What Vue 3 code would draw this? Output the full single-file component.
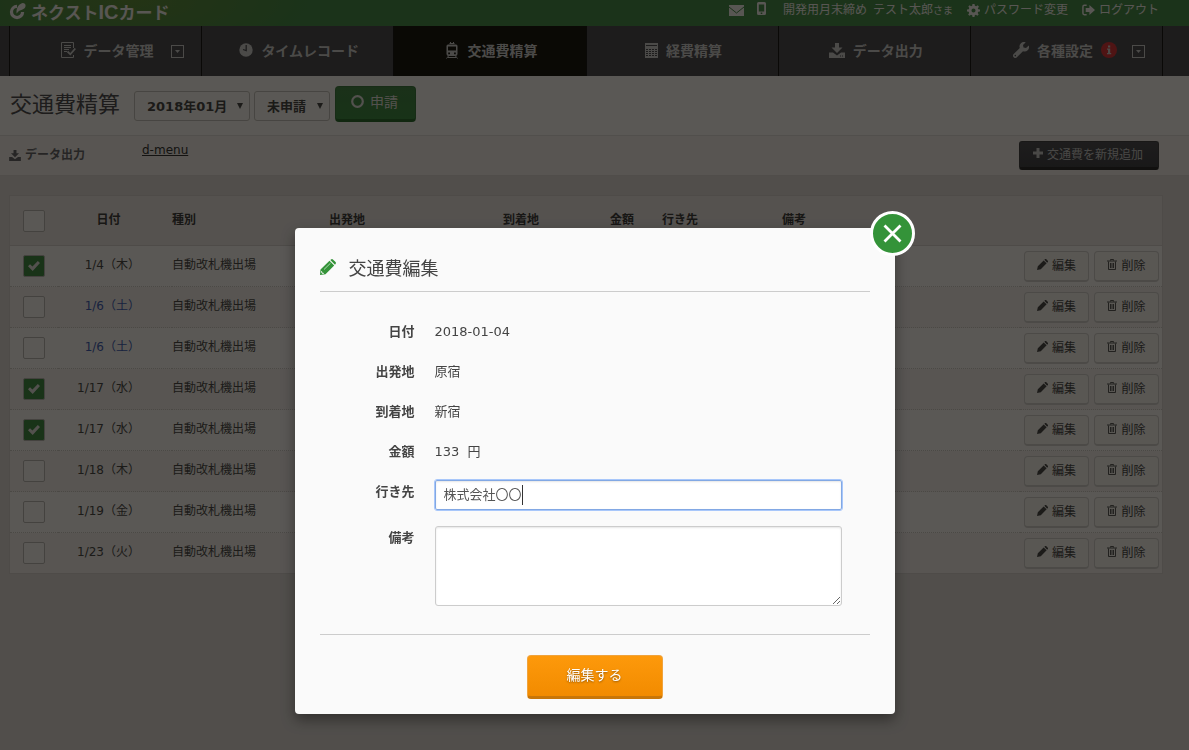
<script setup>
import { ref } from 'vue'

const navItems = [
  { label: 'データ管理', icon: 'doc', menu: true },
  { label: 'タイムレコード', icon: 'clock' },
  { label: '交通費精算', icon: 'train', active: true },
  { label: '経費精算', icon: 'calc' },
  { label: 'データ出力', icon: 'download' },
  { label: '各種設定', icon: 'wrench', badge: true, menu: true },
]

const rows = ref([
  { date: '1/4（木）', checked: true },
  { date: '1/6（土）', checked: false, saturday: true },
  { date: '1/6（土）', checked: false, saturday: true },
  { date: '1/17（水）', checked: true },
  { date: '1/17（水）', checked: true },
  { date: '1/18（木）', checked: false },
  { date: '1/19（金）', checked: false },
  { date: '1/23（火）', checked: false },
])

const details = [
  { label: '日付', value: '2018-01-04' },
  { label: '出発地', value: '原宿' },
  { label: '到着地', value: '新宿' },
  { label: '金額', value: '133  円' },
]

const destination = ref('株式会社〇〇')
const note = ref('')
</script>

<template>
  <div class="page">
    <header class="topbar">
      <a href="#" class="logo">
        <svg class="logo-mark" viewBox="0 0 18 18" aria-hidden="true">
          <path d="M8.500 3.600A5.900 5.900 0 1 0 14.400 9.500" fill="none" stroke="currentColor" stroke-width="3.400" />
          <path d="M8 11C7.500 5.500 10 1 14.500 0C17.500 0 18.500 3 16.500 5.500C14.500 7.500 11.500 7.500 10.500 8.500Z" fill="currentColor" />
        </svg>
        <span class="logo-text">ネクスト<span class="logo-ic">IC</span>カード</span>
      </a>
      <nav class="account">
        <a href="#" class="mail" aria-label="メール">
          <svg width="15" height="11" viewBox="0 0 15 11"><path d="M0 0H15V11H0Z" fill="currentColor" /><path d="M0 2L7.500 8L15 2" fill="none" stroke="#458c4a" /></svg>
        </a>
        <a href="#" class="phone" aria-label="携帯">
          <svg width="9" height="13" viewBox="0 0 9 13"><path d="M1.500 0H7.500Q9 0 9 1.500V11.500Q9 13 7.500 13H1.500Q0 13 0 11.500V1.500Q0 0 1.500 0ZM1.800 2.500V9.500H7.200V2.500ZM3.700 10.600V12H5.300V10.600Z" fill="currentColor" fill-rule="evenodd" /></svg>
        </a>
        <span class="user"><span>開発用月末締め</span><span>テスト太郎<small>さま</small></span></span>
        <a href="#" class="account-link">
          <svg width="13" height="13" viewBox="0 0 16 16"><path d="M6.700 0H9.300L9.700 2.200L11.300 2.900L13.200 1.600L14.700 3.300L13.300 5.100L13.900 6.500L16 6.900V9.200L13.800 9.600L13.200 11.200L14.400 13L12.700 14.600L11 13.300L9.600 13.900L9.200 16H6.800L6.400 13.900L4.900 13.200L3 14.400L1.400 12.800L2.700 11L2.100 9.500L0 9.100V6.800L2.200 6.400L2.800 4.900L1.600 3L3.200 1.400L5 2.700L6.400 2.100ZM8 5.500A2.500 2.500 0 1 0 8 10.500A2.500 2.500 0 1 0 8 5.500Z" fill="currentColor" fill-rule="evenodd" /></svg>
          パスワード変更
        </a>
        <a href="#" class="account-link logout">
          <svg width="13" height="12" viewBox="0 0 14 12"><path d="M5 1H2.500Q1 1 1 2.500V9.500Q1 11 2.500 11H5" fill="none" stroke="currentColor" stroke-width="1.600" /><path d="M4 3.800H8V.600L14 6L8 11.400V8.200H4Z" fill="currentColor" /></svg>
          ログアウト
        </a>
      </nav>
    </header>

    <nav class="mainnav">
      <div class="nav-grid">
        <a v-for="item in navItems" :key="item.label" href="#" class="nav-item" :class="{ active: item.active, notice: item.badge }">
          <svg v-if="item.icon === 'doc'" width="15" height="16" viewBox="0 0 15 16"><path d="M12.500 6V.500H.500V15.500H12.500V13M3 3.500H10M3 5.500H10M3 7.500H8M3 9.500H6" fill="none" stroke="currentColor" /><path d="M6.500 9.500L9.300 12.300L14.300 6.500" fill="none" stroke="currentColor" stroke-width="1.800" /></svg>
          <svg v-else-if="item.icon === 'clock'" width="14" height="14" viewBox="0 0 14 14"><circle cx="7" cy="7" r="6.700" fill="currentColor" /><path d="M7.200 2V7.500L4 6.500" fill="none" stroke="#4a4b52" stroke-width="1.300" /></svg>
          <svg v-else-if="item.icon === 'train'" width="14" height="17" viewBox="0 0 14 17"><path d="M3 2.500H11Q12.500 2.500 12.500 4V12Q12.500 14 10.500 14H3.500Q1.500 14 1.500 12V4Q1.500 2.500 3 2.500ZM3 4.500V8.500H11V4.500ZM3.200 10.500V12.200H5V10.500ZM9 10.500V12.200H10.800V10.500Z" fill="currentColor" fill-rule="evenodd" /><path d="M4.500 1.500H9.500M5.500 0V1M8.500 0V1M3.500 14L1.500 16.500M10.500 14L12.500 16.500M3 15.500H11" stroke="currentColor" /></svg>
          <svg v-else-if="item.icon === 'calc'" width="13" height="15" viewBox="0 0 13 15"><rect width="13" height="15" fill="currentColor" /><path d="M1 2.500H12M1 6.500H12M1 8.500H12M1 10.500H12M1 12.500H12" stroke="#4a4b52" /><path d="M3.500 5V14M6.500 5V14M9.500 5V14" stroke="currentColor" /></svg>
          <svg v-else-if="item.icon === 'download'" width="16" height="15" viewBox="0 0 16 15"><path d="M6 0H10V4.500H13.500L8 10L2.500 4.500H6ZM0 9.500H4L8 12.500L12 9.500H16V15H0ZM11 12.500V13.500H12V12.500ZM13 12.500V13.500H14V12.500Z" fill="currentColor" fill-rule="evenodd" /></svg>
          <svg v-else width="16" height="16" viewBox="0 0 16 16"><path d="M15.800 3.500L13 6L10.500 5.500L10 3L12.800.300A4.500 4.500 0 0 0 6.800 6L.700 12A1.900 1.900 0 0 0 3.900 15.300L10 9.200A4.500 4.500 0 0 0 15.800 3.500ZM2.300 12.800A.800.800 0 1 1 2.300 14.400A.800.800 0 1 1 2.300 12.800Z" fill="currentColor" fill-rule="evenodd" /></svg>
          <span>{{ item.label }}</span>
          <span v-if="item.badge" class="badge">
            <svg width="16" height="16" viewBox="0 0 16 16"><circle cx="8" cy="8" r="8" fill="#d9363b" /><path d="M7 3.500H9.200V5.500H7ZM6 6.500H9.200V11H10.200V12.300H6V11H7V7.800H6Z" fill="#cfcfcf" /></svg>
          </span>
          <svg v-if="item.menu" class="drop" width="13" height="13" viewBox="0 0 13 13"><rect x=".5" y=".5" width="12" height="12" fill="none" stroke="currentColor" /><path d="M4 5H9L6.500 8Z" fill="currentColor" /></svg>
        </a>
      </div>
    </nav>

    <section class="heading">
      <h1>交通費精算</h1>
      <div class="select-box">
        <select class="month" aria-label="対象月"><option>2018年01月</option></select>
        <svg class="caret-down" viewBox="0 0 7 7"><path d="M0 0H7L3.500 7Z" fill="currentColor" /></svg>
      </div>
      <div class="select-box status-box">
        <select class="status" aria-label="申請状況"><option>未申請</option></select>
        <svg class="caret-down" viewBox="0 0 7 7"><path d="M0 0H7L3.500 7Z" fill="currentColor" /></svg>
      </div>
      <button type="button" class="apply">
        <svg width="13" height="13" viewBox="0 0 13 13"><circle cx="6.500" cy="6.500" r="5.300" fill="none" stroke="currentColor" stroke-width="2.200" /></svg>
        申請
      </button>
    </section>

    <section class="toolbar">
      <a href="#" class="export">
        <svg width="12" height="11" viewBox="0 0 16 15"><path d="M6 0H10V4.500H13.500L8 10L2.500 4.500H6ZM0 9.500H4L8 12.500L12 9.500H16V15H0Z" fill="currentColor" /></svg>
        データ出力
      </a>
      <a href="#" class="dmenu">d-menu</a>
      <button type="button" class="add">
        <svg width="10" height="10" viewBox="0 0 10 10"><path d="M3.500 0H6.500V3.500H10V6.500H6.500V10H3.500V6.500H0V3.500H3.500Z" fill="currentColor" /></svg>
        交通費を新規追加
      </button>
    </section>

    <main class="content">
      <table class="records">
        <colgroup>
          <col class="c-check" /><col class="c-date" /><col class="c-kind" /><col class="c-place" /><col class="c-arrive" /><col class="c-fare" /><col class="c-dest" /><col /><col class="c-actions" />
        </colgroup>
        <thead>
          <tr>
            <th><input type="checkbox" aria-label="すべて選択" /></th>
            <th class="date">日付</th>
            <th>種別</th>
            <th>出発地</th>
            <th>到着地</th>
            <th>金額</th>
            <th>行き先</th>
            <th>備考</th>
            <th></th>
          </tr>
        </thead>
        <tbody>
          <tr v-for="(row, i) in rows" :key="i">
            <td><input v-model="row.checked" type="checkbox" :aria-label="row.date" /></td>
            <td class="date" :class="{ saturday: row.saturday }">{{ row.date }}</td>
            <td>自動改札機出場</td>
            <td></td>
            <td></td>
            <td></td>
            <td></td>
            <td></td>
            <td>
              <div class="actions">
                <button type="button">
                  <svg width="11" height="11" viewBox="0 0 16 16"><path d="M0 16L1.200 10.500L9.700 2L14 6.300L5.500 14.800ZM10.700 1.200L11.900 0H13.200L16 2.800V4.100L14.800 5.300Z" fill="currentColor" /></svg>
                  編集
                </button>
                <button type="button">
                  <svg width="10" height="11" viewBox="0 0 10 11"><path d="M3.500 1.500V.500H6.500V1.500M0 2H10M1.500 2.500V10.500H8.500V2.500M3.500 4V9M5 4V9M6.500 4V9" fill="none" stroke="currentColor" stroke-width=".9" /></svg>
                  削除
                </button>
              </div>
            </td>
          </tr>
        </tbody>
      </table>
    </main>
  </div>

  <div class="overlay">
    <div class="modal" role="dialog" aria-labelledby="modal-title">
      <button type="button" class="close" aria-label="閉じる">
        <svg width="19" height="19" viewBox="0 0 19 19"><path d="M1.500 1.500L17.500 17.500M17.500 1.500L1.500 17.500" stroke="currentColor" stroke-width="2.800" /></svg>
      </button>
      <form @submit.prevent>
        <h2 id="modal-title">
          <svg width="16" height="16" viewBox="0 0 16 16"><path d="M0 16L.500 10.500L9.500 1.800L14.200 6.500L5.500 15.200ZM10.300 1L11.400.200Q12.200-.200 12.900.400L15.600 3.100Q16.200 3.900 15.700 4.700L15 5.700Z" fill="currentColor" /><path d="M4 10.500L10.500 4.200" stroke="#b9dfbb" stroke-width=".9" /><path d="M1.500 12.200L2 14.200L3.800 14.400" fill="none" stroke="#fafafa" /></svg>
          交通費編集
        </h2>
        <div class="fields">
          <div v-for="item in details" :key="item.label" class="field">
            <span class="label">{{ item.label }}</span>
            <span class="value">{{ item.value }}</span>
          </div>
          <div class="field">
            <label class="label" for="destination">行き先</label>
            <span class="text-wrap">
              <input id="destination" v-model="destination" type="text" />
              <span class="text-cursor"></span>
            </span>
          </div>
          <div class="field">
            <label class="label" for="note">備考</label>
            <textarea id="note" v-model="note"></textarea>
          </div>
        </div>
        <div class="submit-row">
          <button type="submit" class="submit">編集する</button>
        </div>
      </form>
    </div>
  </div>
</template>

<style>
body {
  background: #dfdbd6;
}
</style>

<style scoped>
* {
  box-sizing: border-box;
}

.page,
.overlay,
button,
input,
select,
textarea {
  font-family: "DejaVu Sans", "Noto Sans CJK JP", sans-serif;
}

.page {
  min-height: 100vh;
  color: #484848;
  font-size: 12px;
  background: #dfdbd6;
}

svg {
  flex: none;
}

a {
  color: inherit;
  text-decoration: none;
}

.topbar {
  display: flex;
  justify-content: space-between;
  height: 26px;
  padding: 0 30px 0 9px;
  color: #f3f0ee;
  background: radial-gradient(ellipse 180px 60px at 130px 0, #5f8f3d, #458c4a);
}

.logo {
  display: flex;
  gap: 5px;
  align-items: center;
  height: 23px;
}

.logo-mark {
  width: 17px;
  height: 17px;
}

.logo-text {
  font: bold 17px/23px "Noto Sans CJK JP", sans-serif;
}

.logo-ic {
  font: bold 20px/20px "Liberation Sans", sans-serif;
}

.account {
  display: flex;
  align-items: center;
  height: 20px;
  line-height: 20px;
}

.account a {
  display: flex;
  align-items: center;
}

.account .phone {
  align-self: flex-start;
  height: 17px;
  margin: 0 17px 0 13px;
}

.user {
  display: flex;
  gap: 6px;
}

.user small {
  font-size: 10px;
}

.account-link {
  gap: 4px;
  margin-left: 14px;
}

.mainnav {
  padding: 0 26px 0 9px;
  background: #4a4b52;
}

.nav-grid {
  display: grid;
  grid-template-columns: repeat(6, 1fr);
  border-left: 1px solid #151515;
}

.nav-item {
  position: relative;
  display: flex;
  gap: 8px;
  align-items: center;
  justify-content: center;
  height: 50px;
  padding: 0 0 2px 3px;
  color: #cfcfcf;
  font-size: 14px;
  font-weight: bold;
  border-right: 1px solid #151515;
}

.nav-item.notice {
  padding: 0 3px 2px 0;
}

.nav-item.active {
  background: #141411;
}

.badge {
  display: flex;
}

.drop {
  position: absolute;
  top: 19px;
  right: 17px;
}

.heading {
  display: flex;
  align-items: flex-start;
  height: 60px;
  padding: 10px 10px 0;
  background: #f9f6f2;
  border-bottom: 1px solid #e0ddd9;
}

h1 {
  margin: 0 14px 0 0;
  color: #4c4c50;
  font-size: 22px;
  font-weight: normal;
  line-height: 38px;
}

.select-box {
  position: relative;
  margin: 5px 4px 0 0;
}

.status-box {
  margin-right: 5px;
}

select {
  display: block;
  width: 116px;
  height: 30px;
  padding: 0 12px;
  color: #454545;
  font-size: 13px;
  font-weight: bold;
  background: #f9f6f2;
  border: 1px solid #c4c1bc;
  border-radius: 3px;
  appearance: none;
}

.status {
  width: 76px;
}

.caret-down {
  position: absolute;
  top: 12px;
  right: 7px;
  width: 6px;
  height: 6px;
}

.apply,
.add,
.actions button {
  display: flex;
  align-items: center;
  justify-content: center;
}

.apply {
  gap: 6px;
  width: 81px;
  height: 36px;
  padding: 0 2px 4px 0;
  color: #e5e2df;
  font-size: 14px;
  background: linear-gradient(#438548, #3d8c46);
  border: 1px solid #3a7940;
  border-bottom: 3px solid #286a30;
  border-radius: 4px;
}

.toolbar {
  display: flex;
  align-items: flex-start;
  height: 40px;
  padding: 5px 30px 0 9px;
  background: #f2eeeb;
  border-bottom: 1px solid #dcd8d4;
}

.export {
  display: flex;
  gap: 4px;
  align-items: center;
  width: 133px;
  color: #66666a;
  font-weight: bold;
  line-height: 28px;
}

.dmenu {
  color: #333;
  line-height: 18px;
  text-decoration: underline;
}

.add {
  gap: 4px;
  width: 140px;
  height: 29px;
  margin-left: auto;
  padding: 0 2px 3px 0;
  color: #c8c8c8;
  font-size: 12px;
  background: linear-gradient(#4c4d54, #404147);
  border: 1px solid #3f4044;
  border-bottom: 3px solid #28282c;
  border-radius: 3px;
}

.content {
  padding: 19px 26px 0 9px;
}

.records {
  width: 100%;
  table-layout: fixed;
  border: 1px solid #d6d2ce;
  border-spacing: 0;
  border-collapse: separate;
}

.c-check { width: 48px; }
.c-date { width: 114px; }
.c-kind { width: 157px; }
.c-place { width: 174px; }
.c-arrive { width: 107px; }
.c-fare { width: 52px; }
.c-dest { width: 120px; }
.c-actions { width: 142px; }

th,
td {
  height: 41px;
  padding: 0 0 2px;
  line-height: 18px;
  text-align: left;
  white-space: nowrap;
}

th {
  height: 50px;
  color: #3c3c3c;
  background: #ebe6e2;
  border-bottom: 1px solid #d6d2ce;
}

th:first-child,
td:first-child {
  padding: 0 0 0 13px;
}

td:last-child {
  padding: 0;
}

th.date {
  padding-right: 13px;
  text-align: center;
}

td {
  background: #f9f6f2;
  border-bottom: 1px dotted #cfcbc7;
}

tbody tr:nth-child(even) td {
  background: #f2eeeb;
}

tbody tr:last-child td {
  height: 40px;
  border-bottom: 0;
}

td.date {
  padding-right: 32px;
  text-align: right;
}

td.saturday {
  color: #3d5cb4;
}

input[type="checkbox"] {
  display: block;
  width: 22px;
  height: 22px;
  margin: 0;
  background: #f9f6f2;
  border: 1px solid #bbb8b4;
  border-radius: 2px;
  appearance: none;
}

input[type="checkbox"]:checked {
  background: #3f8c46;
}

input[type="checkbox"]:checked::before {
  display: block;
  width: 12px;
  height: 10px;
  margin: 5px 0 0 4px;
  content: "";
  background: #e6e3df;
  clip-path: polygon(0 52%, 17% 33%, 37% 54%, 82% 0, 100% 20%, 39% 100%);
}

.actions {
  display: flex;
  gap: 5px;
  padding-left: 4px;
}

.actions button {
  gap: 4px;
  width: 65px;
  height: 31px;
  padding: 0 0 2px;
  color: #484848;
  font-size: 12px;
  background: #f5f2ee;
  border: 1px solid #d2cfcb;
  border-bottom-width: 2px;
  border-radius: 4px;
}

.overlay {
  position: fixed;
  inset: 0;
  display: flex;
  align-items: flex-start;
  justify-content: center;
  padding-top: 228px;
  background: rgba(5, 3, 0, 0.65);
}

.modal {
  position: relative;
  width: 600px;
  max-width: 95%;
  padding: 15px 25px;
  color: #444;
  font-size: 13px;
  background: #fafafa;
  border-radius: 4px;
  box-shadow: 0 6px 14px rgba(0, 0, 0, 0.4);
}

.close {
  position: absolute;
  top: -17px;
  right: -20px;
  display: flex;
  align-items: center;
  justify-content: center;
  width: 45px;
  height: 45px;
  padding: 0;
  color: #fff;
  background: #349339;
  border: 3px solid #fff;
  border-radius: 50%;
}

h2 {
  display: flex;
  gap: 13px;
  align-items: center;
  height: 49px;
  margin: 0 0 20px;
  padding-bottom: 1px;
  color: #444;
  font-size: 18px;
  font-weight: normal;
  border-bottom: 1px solid #ccc;
}

h2 svg {
  color: #349339;
}

.field {
  display: flex;
  gap: 20px;
  align-items: flex-start;
  min-height: 40px;
  padding-top: 8px;
  line-height: 20px;
}

.label,
.value {
  padding-top: 2px;
}

.label {
  width: 95px;
  font-weight: bold;
  text-align: right;
}

.value {
  white-space: pre;
}

.text-wrap {
  position: relative;
  flex: 0 0 407px;
  height: 38px;
}

input[type="text"],
textarea {
  display: block;
  width: 407px;
  margin: 0;
  padding: 0 8px 3px;
  color: #555;
  font-size: 13px;
  background: #fff;
  border: 1px solid #ccc;
  border-radius: 3px;
  box-shadow: inset 0 1px 2px rgba(0, 0, 0, 0.1);
}

input[type="text"] {
  height: 30px;
  border-color: #82a8e4;
  border-radius: 2px;
  outline: 1px solid #a8c7fa;
}

.text-cursor {
  position: absolute;
  top: 5px;
  left: 87px;
  width: 1px;
  height: 20px;
  background: #333;
}

textarea {
  height: 80px;
}

.submit-row {
  display: flex;
  justify-content: center;
  margin-top: 28px;
  padding-top: 20px;
  border-top: 1px solid #ccc;
}

.submit {
  width: 136px;
  height: 44px;
  padding: 0 0 4px;
  color: #fff;
  font-size: 14px;
  text-shadow: 0 1px 2px rgba(0, 0, 0, 0.4);
  background: linear-gradient(#fd990b, #f28b00);
  border: 1px solid #f0a33c;
  border-bottom: 3px solid #c87608;
  border-radius: 4px;
}
</style>
